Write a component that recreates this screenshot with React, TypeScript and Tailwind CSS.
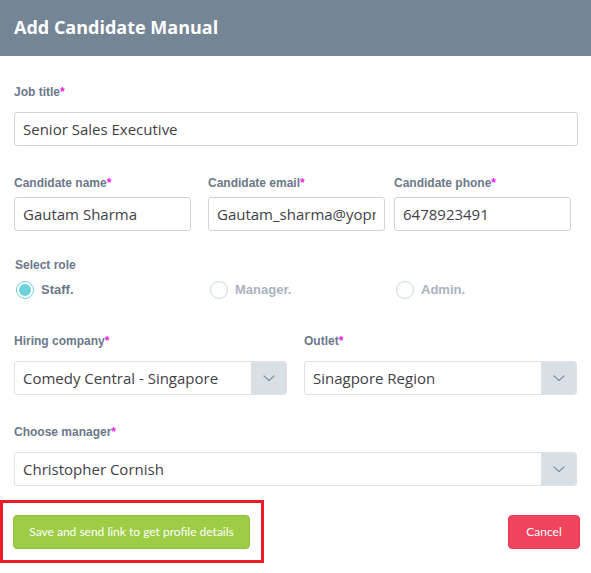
import { useState } from 'react'

const labelCls = "block text-[12px] leading-[18px] font-bold text-[#6b7889] font-['Liberation_Sans',Arial,sans-serif]"
const inputCls = "w-full h-[34px] px-[8px] border border-[#cfd3d7] rounded-[3px] text-[15px] text-[#3f3f46] font-['Open_Sans',sans-serif] bg-white outline-none"

function Req() {
  return <span className="text-[#e91ee6]">*</span>
}

function Chevron() {
  return (
    <svg width="12" height="7" viewBox="0 0 12 7" fill="none">
      <path d="M1 1l5 4.5L11 1" stroke="#8a97a3" strokeWidth="1.4" strokeLinecap="round" strokeLinejoin="round" />
    </svg>
  )
}

function SelectBox({ value }: { value: string }) {
  return (
    <div className="flex h-[34px] border border-[#dde1e5] rounded-[3px] overflow-hidden bg-white">
      <div className="flex-1 flex items-center px-[8px] text-[15px] text-[#3f3f46] font-['Open_Sans',sans-serif] truncate">{value}</div>
      <div className="w-[35px] bg-[#d8dfe5] flex items-center justify-center">
        <Chevron />
      </div>
    </div>
  )
}

function Radio({ label, checked, onClick }: { label: string; checked: boolean; onClick: () => void }) {
  return (
    <button type="button" onClick={onClick} className="flex items-center gap-[7px] h-[18px]">
      <span className={`w-[18px] h-[18px] rounded-full border flex items-center justify-center ${checked ? 'border-[#6fd3e2]' : 'border-[#c9d7de]'}`}>
        {checked && <span className="w-[12px] h-[12px] rounded-full bg-[#6dd2e0]" />}
      </span>
      <span className={`text-[13px] font-bold font-['Liberation_Sans',Arial,sans-serif] ${checked ? 'text-[#6b7889]' : 'text-[#a9b2bc]'}`}>{label}</span>
    </button>
  )
}

export default function App() {
  const [role, setRole] = useState('staff')

  return (
    <div className="w-[591px] h-[573px] bg-white">
      <div className="h-[56px] bg-[#748595] flex items-center px-[14px]">
        <h1 className="text-white text-[18px] font-bold font-['Open_Sans',sans-serif] -mt-[2px]">Add Candidate Manual</h1>
      </div>

      <div className="pl-[14px] pr-[13px] pt-[27px]">
        <label className={labelCls + " mb-[11px]"}>Job title<Req /></label>
        <input className={inputCls} defaultValue="Senior Sales Executive" />

        <div className="flex gap-[17px] mt-[28px]">
          <div className="w-[177px]">
            <label className={labelCls + " mb-[5px]"}>Candidate name<Req /></label>
            <input className={inputCls} defaultValue="Gautam Sharma" />
          </div>
          <div className="w-[177px]">
            <label className={labelCls + " mb-[5px]"}>Candidate email<Req /></label>
            <input className={inputCls} defaultValue="Gautam_sharma@yopmail.com" />
          </div>
          <div className="w-[177px] -ml-[8px]">
            <label className={labelCls + " mb-[5px]"}>Candidate phone<Req /></label>
            <input className={inputCls} defaultValue="6478923491" />
          </div>
        </div>

        <div className="mt-[25px]">
          <label className={labelCls + " mb-[7px] pl-[1px]"}>Select role</label>
          <div className="flex pl-[2px]">
            <div className="w-[194px]"><Radio label="Staff." checked={role === 'staff'} onClick={() => setRole('staff')} /></div>
            <div className="w-[186px]"><Radio label="Manager." checked={role === 'manager'} onClick={() => setRole('manager')} /></div>
            <div><Radio label="Admin." checked={role === 'admin'} onClick={() => setRole('admin')} /></div>
          </div>
        </div>

        <div className="flex gap-[17px] mt-[33px] pr-[1px]">
          <div className="flex-1">
            <label className={labelCls + " mb-[11px]"}>Hiring company<Req /></label>
            <SelectBox value="Comedy Central - Singapore" />
          </div>
          <div className="flex-1">
            <label className={labelCls + " mb-[11px]"}>Outlet<Req /></label>
            <SelectBox value="Sinagpore Region" />
          </div>
        </div>

        <div className="mt-[28px] pr-[1px]">
          <label className={labelCls + " mb-[11px]"}>Choose manager<Req /></label>
          <SelectBox value="Christopher Cornish" />
        </div>
      </div>

      <div className="flex items-center justify-between mt-[14px] pr-[11px]">
        <div className="border-[3px] border-[#ee1c25] w-[264px] h-[63px] flex items-center pl-[10px]">
          <button className="w-[237px] h-[34px] rounded-[4px] bg-[#9ccd45] border border-[#8fbd3c] text-white text-[12px] font-['Lato',sans-serif]">
            Save and send link to get profile details
          </button>
        </div>
        <button className="w-[72px] h-[34px] rounded-[4px] bg-[#ef435e] border border-[#e63a55] text-white text-[12px] font-['Lato',sans-serif]">
          Cancel
        </button>
      </div>
    </div>
  )
}
